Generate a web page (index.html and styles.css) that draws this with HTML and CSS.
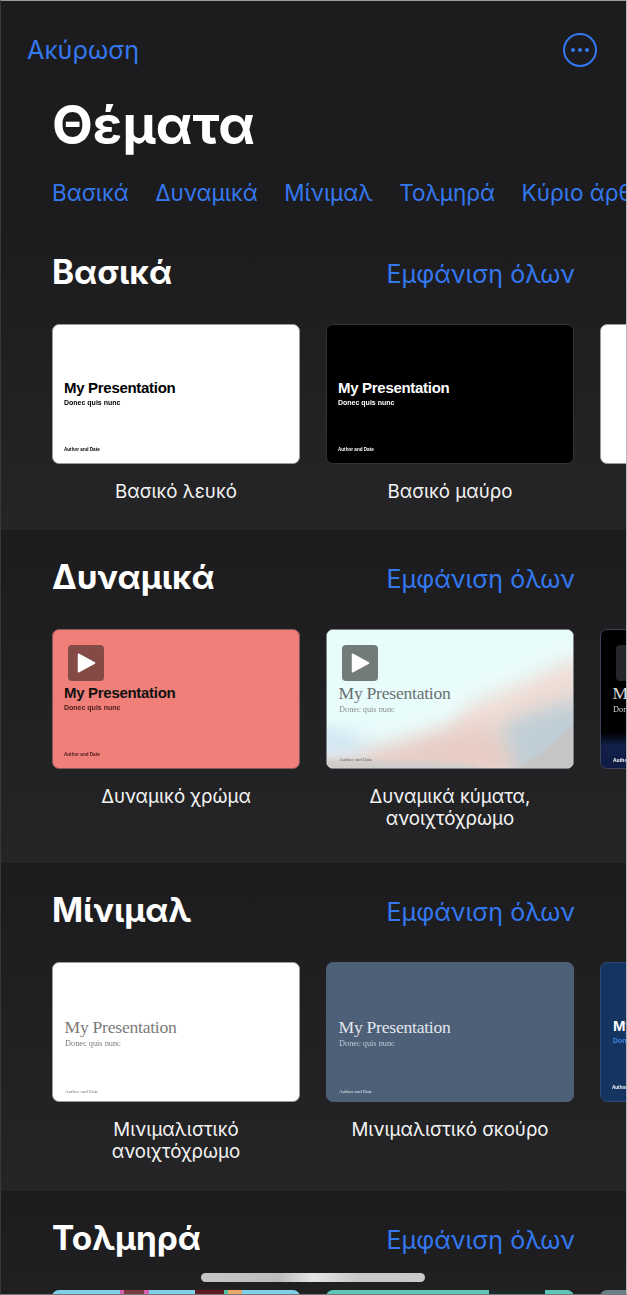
FILE: index.html
```html
<!DOCTYPE html>
<html lang="el">
<head>
<meta charset="utf-8">
<title>Θέματα</title>
<link rel="stylesheet" href="styles.css">
</head>
<body>
<main class="screen">
  <header class="top">
    <div class="nav">
      <a class="cancel">Ακύρωση</a>
      <svg class="more" viewBox="0 0 36 36" width="36" height="36" aria-hidden="true">
        <circle cx="18" cy="18" r="16" fill="none" stroke="#3478f0" stroke-width="2"/>
        <circle cx="11" cy="18" r="2" fill="#3478f0"/>
        <circle cx="18" cy="18" r="2" fill="#3478f0"/>
        <circle cx="25" cy="18" r="2" fill="#3478f0"/>
      </svg>
    </div>
    <h1 class="title">Θέματα</h1>
    <nav class="tabs">
      <a>Βασικά</a><a>Δυναμικά</a><a>Μίνιμαλ</a><a>Τολμηρά</a><a>Κύριο άρθρο</a>
    </nav>
  </header>

  <section class="group group-short">
    <div class="group-head"><h2>Βασικά</h2><a>Εμφάνιση όλων</a></div>
    <div class="row">
      <figure class="item">
        <div class="thumb t-white sans"><b class="p-title">My Presentation</b><span class="p-sub">Donec quis nunc</span><span class="p-auth">Author and Date</span></div>
        <figcaption>Βασικό λευκό</figcaption>
      </figure>
      <figure class="item">
        <div class="thumb t-black sans"><b class="p-title">My Presentation</b><span class="p-sub">Donec quis nunc</span><span class="p-auth">Author and Date</span></div>
        <figcaption>Βασικό μαύρο</figcaption>
      </figure>
      <figure class="item"><div class="thumb t-white"></div></figure>
    </div>
  </section>

  <section class="group group-dyn">
    <div class="group-head"><h2>Δυναμικά</h2><a>Εμφάνιση όλων</a></div>
    <div class="row">
      <figure class="item">
        <div class="thumb t-coral sans">
          <div class="play play-coral"><svg viewBox="0 0 20 20" width="20" height="20"><path d="M2.5 1.2 18.6 10 2.5 18.8Z" fill="#fff" stroke="#fff" stroke-linejoin="round" stroke-width="1.5"/></svg></div>
          <b class="p-title">My Presentation</b><span class="p-sub">Donec quis nunc</span><span class="p-auth">Author and Date</span>
        </div>
        <figcaption>Δυναμικό χρώμα</figcaption>
      </figure>
      <figure class="item">
        <div class="thumb t-wave slab">
          <svg class="wave" viewBox="0 0 248 140" preserveAspectRatio="none" aria-hidden="true">
            <defs>
              <filter id="blur" x="-30%" y="-30%" width="160%" height="160%"><feGaussianBlur stdDeviation="10"/></filter>
              <filter id="blur2" x="-20%" y="-20%" width="140%" height="140%"><feGaussianBlur stdDeviation="2.5"/></filter>
            </defs>
            <rect width="248" height="140" fill="#e9fcfc"/>
            <path d="M140 78C180 62 220 42 262 24V110H120Z" fill="#efdcd4" filter="url(#blur)"/>
            <path d="M-10 130C40 124 70 114 110 102C150 90 175 98 200 112L215 150H-10Z" fill="#e8cdc5" filter="url(#blur)"/>
            <path d="M175 98C200 84 228 76 262 68V150H195Z" fill="#bfced6" filter="url(#blur)"/>
            <path d="M-12 100C10 100 30 108 48 118L20 124H-12Z" fill="#cbe1f2" filter="url(#blur)"/>
            <path d="M-10 150V130C40 134 100 132 150 138L170 150Z" fill="#cfcdcc" filter="url(#blur2)"/>
            <path d="M185 144C210 130 230 115 250 94V144Z" fill="#c6c4c4" filter="url(#blur2)"/>
          </svg>
          <div class="play play-wave"><svg viewBox="0 0 20 20" width="20" height="20"><path d="M2.5 1.2 18.6 10 2.5 18.8Z" fill="#fff" stroke="#fff" stroke-linejoin="round" stroke-width="1.5"/></svg></div>
          <span class="p-title">My Presentation</span><span class="p-sub">Donec quis nunc</span><span class="p-auth">Author and Date</span>
        </div>
        <figcaption>Δυναμικά κύματα, ανοιχτόχρωμο</figcaption>
      </figure>
      <figure class="item">
        <div class="thumb t-night slab">
          <div class="play play-night"></div>
          <span class="p-title">My Presentation</span><span class="p-sub">Donec quis nunc</span><span class="p-auth">Author and Date</span>
        </div>
      </figure>
    </div>
  </section>

  <section class="group group-min">
    <div class="group-head"><h2>Μίνιμαλ</h2><a>Εμφάνιση όλων</a></div>
    <div class="row">
      <figure class="item">
        <div class="thumb t-white slab min"><span class="p-title">My Presentation</span><span class="p-sub">Donec quis nunc</span><span class="p-auth">Author and Date</span></div>
        <figcaption>Μινιμαλιστικό ανοιχτόχρωμο</figcaption>
      </figure>
      <figure class="item">
        <div class="thumb t-slate slab min"><span class="p-title">My Presentation</span><span class="p-sub">Donec quis nunc</span><span class="p-auth">Author and Date</span></div>
        <figcaption>Μινιμαλιστικό σκούρο</figcaption>
      </figure>
      <figure class="item">
        <div class="thumb t-navy sans"><b class="p-title">My Presentation</b><span class="p-sub">Donec quis nunc</span><span class="p-auth">Author and Date</span></div>
      </figure>
    </div>
  </section>

  <section class="group">
    <div class="group-head"><h2>Τολμηρά</h2><a>Εμφάνιση όλων</a></div>
    <div class="row">
      <figure class="item"><div class="thumb t-bold1"></div></figure>
      <figure class="item"><div class="thumb t-bold2"></div></figure>
      <figure class="item"><div class="thumb t-bold3"></div></figure>
    </div>
  </section>

  <div class="home-bar"></div>
</main>
</body>
</html>
```
FILE: styles.css
```css
* { box-sizing: border-box; }
html, body { margin: 0; padding: 0; background: #1c1c1e; }
body { font-family: Inter, "Noto Sans", sans-serif; color: #fff; }

.screen {
  position: relative;
  width: 627px;
  height: 1295px;
  overflow: hidden;
  background: #1c1c1e;
  border-top: 1px solid #9a9a9c;
  border-left: 1px solid #38383a;
  border-right: 1px solid #b4b4b6;
  border-bottom: 1px solid #77777a;
}

.top { height: 224px; padding: 31px 0 0 26px; }
.nav {
  display: flex;
  justify-content: space-between;
  align-items: center;
  height: 36px;
  padding-right: 28px;
}
.cancel { color: #3478f0; font-size: 25.2px; }
.more { display: block; }
.title {
  margin: 27px 0 0 25px;
  font-size: 53px;
  line-height: 60px;
  font-weight: 700;
}
.tabs {
  display: flex;
  gap: 26.5px;
  margin: 24px 0 0 25px;
  color: #3478f0;
  font-size: 22.5px;
  line-height: 28px;
  white-space: nowrap;
}

.group {
  background: linear-gradient(#1c1c1e, #252527);
  padding-top: 28px;
}
.group-short { height: 305px; }
.group-dyn { height: 333px; }
.group-min { height: 328px; }

.group-head {
  display: flex;
  justify-content: space-between;
  align-items: center;
  height: 38px;
  padding: 0 51px 0 51px;
}
.group-head h2 {
  margin: 0;
  font-size: 33.4px;
  font-weight: 700;
  line-height: 38px;
}
.group-head a {
  color: #3478f0;
  font-size: 25px;
  position: relative;
  top: 2px;
}

.row {
  display: flex;
  gap: 26px;
  margin-top: 33px;
  padding-left: 51px;
  overflow: hidden;
}
.item { flex: 0 0 248px; margin: 0; }
.item figcaption {
  margin-top: 17px;
  padding: 0 20px;
  font-size: 18.7px;
  line-height: 22px;
  text-align: center;
  color: #f4f4f4;
}

.thumb {
  position: relative;
  width: 248px;
  height: 140px;
  border-radius: 7px;
  border: 1px solid #8a8a8c;
  overflow: hidden;
  display: flex;
  flex-direction: column;
  padding: 54px 0 0 11px;
  white-space: nowrap;
}
.sans { font-family: "Liberation Sans", Arial, sans-serif; }
.slab { font-family: "Liberation Serif", serif; padding-top: 53px; padding-left: 11.5px; }

.p-title { position: relative; font-size: 15px; line-height: 18px; letter-spacing: -0.3px; }
.p-sub { position: relative; font-size: 7px; line-height: 10px; margin-top: 1px; font-weight: 700; will-change: transform; }
.p-auth {
  position: absolute;
  left: 11px;
  bottom: 10px;
  font-size: 4.6px;
  line-height: 6px;
  font-weight: 700;
  will-change: transform;
}
.slab .p-title { font-size: 17.6px; line-height: 20px; font-weight: 400; letter-spacing: -0.25px; }
.slab .p-sub { font-size: 8.3px; font-weight: 400; margin-top: 2px; }
.slab .p-auth { left: 11.5px; font-size: 5px; font-weight: 400; bottom: 5px; }
.min { padding-top: 54px; }
.min .p-sub { margin-top: 2px; }
.min .p-auth { bottom: 6px; }

.t-white { background: #fff; color: #000; border-color: #9b9b9b; }
.t-white.min { color: #7a7a7a; }
.t-black { background: #000; color: #fff; border-color: #333335; }
.t-coral { background: #ef7f78; color: #111; border-color: #85575a; }
.t-coral .p-sub, .t-coral .p-auth { color: #4a1c1c; }
.t-wave { background: #e9fcfc; color: #6a7072; border-color: #7d8284; }
.t-wave .wave { position: absolute; inset: 0; width: 100%; height: 100%; }
.t-wave .p-sub { color: #8a9092; }
.t-wave .p-auth { color: #5a5f60; }
.t-night {
  background: linear-gradient(#000 0 74%, #12204a 84%, #0e1c44);
  color: #d8d8d8;
  border-color: #3c4258;
}
.t-night .p-auth { font-family: "Liberation Sans", sans-serif; font-weight: 700; color: #fff; }
.t-slate { background: #4e5f78; color: #e2e6ec; border-color: #4e5f78; }
.t-slate .p-sub { color: #c0c8d4; }
.t-navy { background: #163460; color: #fff; border-color: #2b4a78; padding-left: 12px; }
.t-navy .p-sub { color: #3f86e8; }

.t-bold1, .t-bold2, .t-bold3 { border: 0; padding: 0; }
.t-bold1 {
  background: linear-gradient(90deg,
    #7fd0ea 0 68px, #d860b0 68px 72px, #7a3a40 72px 92px, #d860b0 92px 97px,
    #7fd0ea 97px 143px, #5e1c20 143px 172px, #4fc0a0 172px 176px, #e8a868 176px 190px,
    #7fd0ea 190px);
}
.t-bold2 {
  background: linear-gradient(90deg, #5fc4b8 0 163px, #1e2a2a 163px 219px, #5fc4b8 219px);
}
.t-bold3 { background: #6a8086; }

.play {
  position: absolute;
  left: 15px;
  top: 15px;
  width: 36px;
  height: 36px;
  border-radius: 4px;
  display: flex;
  align-items: center;
  justify-content: center;
}
.play-coral { background: #834a46; }
.play-wave { background: #737a7a; }
.play-night { background: #26272a; }

.home-bar {
  position: absolute;
  left: 200px;
  top: 1272px;
  width: 224px;
  height: 9px;
  border-radius: 5px;
  background: linear-gradient(90deg, #c6c6c6, #bcbcbc 35%, #e4e4e4 50%, #c8c8c8 70%, #cacaca);
}
```
